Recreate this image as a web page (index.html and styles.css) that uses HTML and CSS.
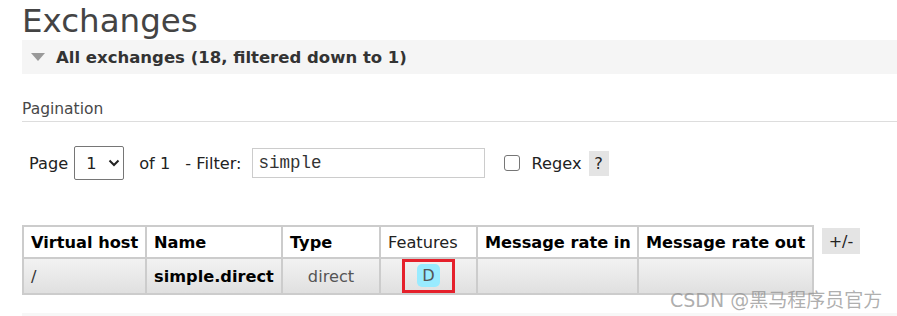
FILE: index.html
```html
<!DOCTYPE html>
<html>
<head>
  <title>Exchanges</title>
  <link rel="stylesheet" href="styles.css">
</head>
<body>
  <div class="main">
    <h1>Exchanges</h1>
    <div class="section">
      <h2 class="section-title"><span class="arrow"></span>All exchanges (18, filtered down to 1)</h2>
      <h3 class="pagination-title">Pagination</h3>
      <div class="pagination">
        <label>Page</label>
        <span class="select">1 <svg width="12" height="8" viewBox="0 0 12 8"><path d="M1.5 1.5 L6 6 L10.5 1.5" fill="none" stroke="#222" stroke-width="2"/></svg></span>
        <span class="of">of 1</span>
        <label>- Filter:</label>
        <span class="filter">simple</span>
        <span class="checkbox"></span>
        <label class="regex">Regex</label>
        <span class="help">?</span>
      </div>
      <div class="table-wrap">
        <table class="list">
          <colgroup>
            <col style="width: 123px">
            <col style="width: 136px">
            <col style="width: 98px">
            <col style="width: 97px">
            <col style="width: 161px">
            <col style="width: 175px">
          </colgroup>
          <thead>
            <tr>
              <th>Virtual host</th>
              <th>Name</th>
              <th>Type</th>
              <th class="plain">Features</th>
              <th>Message rate in</th>
              <th>Message rate out</th>
            </tr>
          </thead>
          <tbody>
            <tr>
              <td>/</td>
              <td class="name">simple.direct</td>
              <td class="center">direct</td>
              <td class="center feat"><span class="mark"><abbr class="badge">D</abbr></span></td>
              <td></td>
              <td></td>
            </tr>
          </tbody>
        </table>
        <span class="toggle">+/-</span>
      </div>
    </div>
    <div class="next-section"></div>
  </div>
  <div class="watermark">CSDN @黑马程序员官方</div>
</body>
</html>
```

FILE: styles.css
```css
body { margin: 0; font-family: "DejaVu Sans", Verdana, sans-serif; color: #484848; background: #fff; overflow: hidden; }
.main { padding: 0 0 0 22px; }
h1 { margin: 0; padding-top: 2px; font-size: 32.5px; font-weight: normal; color: #444; line-height: 38px; }
.section-title { margin: 0; height: 34px; background: #f5f5f5; font-size: 16.5px; font-weight: bold; color: #333; display: flex; align-items: center; }
.arrow { width: 0; height: 0; border-left: 7px solid transparent; border-right: 7px solid transparent; border-top: 8px solid #999; margin: 0 11px 0 9px; }
.pagination-title { margin: 26px 0 0; font-size: 15.5px; font-weight: normal; color: #484848; padding-bottom: 3px; border-bottom: 1px solid #ddd; line-height: 18px; }
.pagination { display: flex; align-items: center; height: 34px; margin-top: 24px; padding-left: 7px; font-size: 16.2px; color: #222; }
.select { display: flex; align-items: center; gap: 11px; box-sizing: border-box; height: 34px; width: 50px; border: 1px solid #767676; border-radius: 2px; margin-left: 6px; padding-left: 11px; }
.of { margin-left: 15px; }
.pagination label { margin-left: 15px; }
.pagination label:first-child { margin-left: 0; }
.filter { box-sizing: border-box; width: 233px; height: 30px; border: 1px solid #ccc; margin-left: 10px; padding: 4px 6px; font-family: "Liberation Mono", monospace; font-size: 17.5px; line-height: 20px; color: #333; }
.checkbox { box-sizing: border-box; width: 16px; height: 16px; border: 1px solid #767676; border-radius: 3px; margin-left: 19px; }
.pagination .regex { margin-left: 12px; }
.help { background: #e4e4e4; width: 20px; height: 25px; display: flex; align-items: center; justify-content: center; margin-left: 7px; }
.table-wrap { display: flex; align-items: flex-start; margin-top: 45px; }
.list { border-collapse: collapse; table-layout: fixed; width: 790px; font-size: 16.2px; color: #000; }
.list th, .list td { border: 2px solid #ccc; padding: 0 7px; height: 30px; text-align: left; white-space: nowrap; }
.list th { font-weight: bold; background: #fff; }
.list th.plain { font-weight: normal; color: #222; }
.list td { height: 33px; background: linear-gradient(#f2f2f2, #e0e0e0); color: #333; }
.list td.name { font-weight: bold; color: #000; }
.list td.center { text-align: center; color: #555; }
.list td.feat { padding: 0; vertical-align: top; }
.mark { display: inline-flex; align-items: center; justify-content: center; width: 47px; height: 28px; border: 3px solid #e5202b; }
.badge { display: inline-block; background: #99ebff; border-radius: 5px; width: 23px; height: 23px; line-height: 23px; text-align: center; color: #555; text-decoration: none; margin-top: -2px; }
.toggle { background: #e4e4e4; margin: 3px 0 0 8px; width: 38px; height: 26px; display: flex; align-items: center; justify-content: center; font-size: 16px; color: #222; }
.next-section { margin-top: 18px; height: 6px; background: #f7f7f7; }
.watermark { position: absolute; left: 670px; top: 285px; font-family: "DejaVu Sans", "Noto Sans CJK SC", sans-serif; font-size: 19px; color: rgba(140, 140, 140, 0.7); }
```
